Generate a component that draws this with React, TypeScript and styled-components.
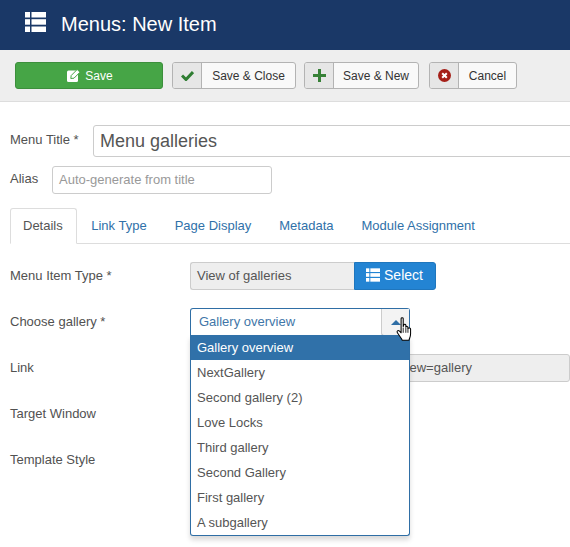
import React from "react";
import styled, { createGlobalStyle } from "styled-components";

const Global = createGlobalStyle`
  html, body { margin: 0; padding: 0; background: #fff; overflow: hidden; }
  body { font-family: "Liberation Sans", Arial, sans-serif; font-size: 13px; color: #515151; width: 570px; height: 547px; }
  * { box-sizing: border-box; }
`;

const Page = styled.div`width: 570px; height: 547px; overflow: hidden;`;

const Header = styled.header`
  height: 50px; background: #1a3867; display: flex; align-items: flex-start; padding: 12px 0 0 25px; gap: 15px;
`;
const HeaderTitle = styled.h1`margin: -13px 0 0; font-size: 20px; font-weight: 400; color: #fff; line-height: 50px;`;

const Toolbar = styled.div`
  height: 52px; background: #eee; border-bottom: 1px solid #ddd; display: flex; padding: 12px 0 0 15px; align-items: flex-start;
`;
const SaveButton = styled.button`
  width: 148px; height: 27px; background: #46a546; border: 1px solid #3c8f3c; border-radius: 3px; color: #fff;
  font: 12px "Liberation Sans", sans-serif; display: flex; align-items: center; justify-content: center; gap: 5px; padding: 0 0 0 2px; margin-right: 9px;
`;
const ToolButton = styled.button<{ $width: number; $gap: number }>`
  width: ${p => p.$width}px; height: 27px; background: #f9f9f9; border: 1px solid #b3b3b3; border-radius: 3px; color: #333;
  font: 12px "Liberation Sans", sans-serif; display: flex; align-items: stretch; padding: 0; margin-right: ${p => p.$gap}px; overflow: hidden;
`;
const ToolIcon = styled.span`
  width: 29px; background: #e6e6e6; border-right: 1px solid #b3b3b3; display: flex; align-items: center; justify-content: center; flex: none;
`;
const ToolLabel = styled.span`flex: 1; display: flex; align-items: center; justify-content: center;`;

const Content = styled.main`padding: 23px 0 0 10px; position: relative;`;

const TitleRow = styled.div`display: flex; align-items: center; height: 32px; white-space: nowrap;`;
const TitleLabel = styled.label`width: 83px; flex: none; color: #515151; font-size: 13px; padding-bottom: 4px;`;
const TitleInput = styled.div`
  width: 500px; height: 32px; flex: none; border: 1px solid #ccc; border-radius: 3px; font-size: 18px; color: #555; padding: 0 6px; display: flex; align-items: center;
`;
const AliasRow = styled.div`display: flex; align-items: center; height: 28px; margin-top: 9px;`;
const AliasLabel = styled.label`width: 42px; flex: none; font-size: 13px; padding-bottom: 4px;`;
const AliasInput = styled.div`
  width: 220px; height: 28px; border: 1px solid #ccc; border-radius: 3px; color: #999; font-size: 13px; padding: 0 6px 2px; display: flex; align-items: center;
`;

const Tabs = styled.nav`display: flex; height: 36px; margin-top: 14px; border-bottom: 1px solid #ddd; align-items: flex-start;`;
const Tab = styled.span<{ $active?: boolean }>`
  height: 36px; padding: 0 14px 2px; display: flex; align-items: center; font-size: 13px;
  color: ${p => (p.$active ? "#555" : "#3071a9")};
  ${p => p.$active ? "background:#fff;border:1px solid #ddd;border-bottom-color:#fff;border-radius:3px 3px 0 0;padding:0 13.5px 2px 12px;" : ""}
`;

const Form = styled.div`padding-top: 18px; display: flex; flex-direction: column; gap: 18px; position: relative;`;
const FormRow = styled.div`display: flex; align-items: center; height: 28px;`;
const RowLabel = styled.label`width: 180px; flex: none; font-size: 13px; padding-bottom: 2px;`;

const TypeField = styled.div`
  width: 164px; height: 28px; background: #eee; border: 1px solid #ccc; border-right: 0; border-radius: 3px 0 0 3px; display: flex; align-items: center; padding: 0 6px 2px; font-size: 13px; color: #555;
`;
const SelectButton = styled.button`
  width: 82px; height: 28px; background: #2384d3; border: 1px solid #1f76bd; border-radius: 0 3px 3px 0; color: #fff; font: 14px "Liberation Sans", sans-serif;
  display: flex; align-items: center; justify-content: center; gap: 4px; padding: 0 1px 2px 0;
`;

const ChosenWrap = styled.div`width: 220px; position: relative; height: 28px;`;
const ChosenField = styled.div`
  height: 28px; border: 1px solid #2f6ea5; border-bottom: 0; border-radius: 3px 3px 0 0; display: flex; background: #fff; color: #3f76a8; font-size: 13px;
`;
const ChosenText = styled.span`flex: 1; display: flex; align-items: center; padding: 0 0 2px 8px;`;
const ChosenArrow = styled.span`
  width: 28px; background: #f3f3f3; border-left: 1px solid #ccc; border-bottom: 1px solid #ccc; border-radius: 0 0 0 3px; display: flex; align-items: center; justify-content: center;
`;
const Caret = styled.span`
  width: 0; height: 0; border-left: 5px solid transparent; border-right: 5px solid transparent; border-bottom: 5px solid #2f6ea5;
`;
const Dropdown = styled.ul`
  position: absolute; top: 27px; left: 0; width: 220px; margin: 0; padding: 0; list-style: none; background: #fff; z-index: 5;
  border: 1px solid #2f6ea5; border-top: 0; border-radius: 0 0 3px 3px; box-shadow: 0 4px 5px rgba(0,0,0,.15);
`;
const Option = styled.li<{ $active?: boolean }>`
  height: 25px; display: flex; align-items: center; padding-left: 6px; font-size: 13px;
  ${p => (p.$active ? "background:#3071a9;color:#fff;" : "color:#555;")}
`;
const Cursor = styled.svg`position: absolute; left: 205px; top: 9px; z-index: 6;`;

const LinkField = styled.div`
  width: 400px; height: 28px; background: #eee; border: 1px solid #ccc; border-radius: 3px; display: flex; align-items: center; padding: 0 0 2px 10px; font-size: 13px; color: #555; white-space: nowrap;
`;

const Bars: React.FC<{ w: number; h: number }> = ({ w, h }) => (
  <svg width={w} height={h} viewBox="0 0 21 20" fill="#fff" style={{ flex: "none" }}>
    <rect x="0" y="0" width="5" height="5.5" />
    <rect x="6.5" y="0" width="14.5" height="5.5" />
    <rect x="0" y="7.2" width="5" height="5.5" />
    <rect x="6.5" y="7.2" width="14.5" height="5.5" />
    <rect x="0" y="14.5" width="5" height="5.5" />
    <rect x="6.5" y="14.5" width="14.5" height="5.5" />
  </svg>
);

const items = ["Gallery overview", "NextGallery", "Second gallery (2)", "Love Locks", "Third gallery", "Second Gallery", "First gallery", "A subgallery"];

export default function App() {
  return (
    <Page>
      <Global />
      <Header>
        <Bars w={21} h={20} />
        <HeaderTitle>Menus: New Item</HeaderTitle>
      </Header>
      <Toolbar>
        <SaveButton>
          <svg width="13" height="13" viewBox="0 0 13 13">
            <rect x="0" y="1.5" width="11" height="11.5" rx="1.5" fill="#fff" />
            <path d="M3.8 9.5 L4.2 6.5 L10.2 0.5 L13 3.2 L7 9.2 Z" fill="#fff" stroke="#46a546" strokeWidth="1" />
          </svg>
          Save
        </SaveButton>
        <ToolButton $width={124} $gap={8}>
          <ToolIcon>
            <svg width="13" height="11" viewBox="0 0 13 11"><path d="M1 5.5 L5 9.5 L12 2" fill="none" stroke="#2f7d32" strokeWidth="3" /></svg>
          </ToolIcon>
          <ToolLabel>Save &amp; Close</ToolLabel>
        </ToolButton>
        <ToolButton $width={115} $gap={10}>
          <ToolIcon>
            <svg width="13" height="13" viewBox="0 0 13 13"><path d="M5 0h3v5h5v3H8v5H5V8H0V5h5z" fill="#378137" /></svg>
          </ToolIcon>
          <ToolLabel>Save &amp; New</ToolLabel>
        </ToolButton>
        <ToolButton $width={88} $gap={0}>
          <ToolIcon>
            <svg width="13" height="13" viewBox="0 0 13 13">
              <circle cx="6.5" cy="6.5" r="6.5" fill="#a51f18" />
              <path d="M4.2 4.2 L8.8 8.8 M8.8 4.2 L4.2 8.8" stroke="#fff" strokeWidth="2" />
            </svg>
          </ToolIcon>
          <ToolLabel>Cancel</ToolLabel>
        </ToolButton>
      </Toolbar>
      <Content>
        <TitleRow>
          <TitleLabel>Menu Title *</TitleLabel>
          <TitleInput>Menu galleries</TitleInput>
        </TitleRow>
        <AliasRow>
          <AliasLabel>Alias</AliasLabel>
          <AliasInput>Auto-generate from title</AliasInput>
        </AliasRow>
        <Tabs>
          <Tab $active>Details</Tab>
          <Tab>Link Type</Tab>
          <Tab>Page Display</Tab>
          <Tab>Metadata</Tab>
          <Tab>Module Assignment</Tab>
        </Tabs>
        <Form>
          <FormRow>
            <RowLabel>Menu Item Type *</RowLabel>
            <TypeField>View of galleries</TypeField>
            <SelectButton>
              <Bars w={14} h={14} />
              Select
            </SelectButton>
          </FormRow>
          <FormRow>
            <RowLabel>Choose gallery *</RowLabel>
            <ChosenWrap>
              <ChosenField>
                <ChosenText>Gallery overview</ChosenText>
                <ChosenArrow><Caret /></ChosenArrow>
              </ChosenField>
              <Dropdown>
                {items.map((t, i) => <Option key={t} $active={i === 0}>{t}</Option>)}
              </Dropdown>
              <Cursor width="18" height="24" viewBox="0.5 0 14.5 22.8">
                <path d="M5 1.5 C5 .5 7 .5 7 1.5 V9 L7.5 7.5 C8 6.5 9.5 6.8 9.5 8 V9.5 C10 8.5 11.5 8.8 11.5 10 V11 C12 10 14 10.3 14 11.5 V16 C14 19 13 20 12.5 22 H6 C5.5 20 3.5 18.5 1.5 15 C.5 13.5 2 12 3.5 13.5 L5 15 Z" fill="#fff" stroke="#000" strokeWidth="1" strokeLinejoin="round" />
                <path d="M7 10 V15 M9.5 10 V15 M11.5 11 V15" stroke="#000" strokeWidth="0.8" />
              </Cursor>
            </ChosenWrap>
          </FormRow>
          <FormRow>
            <RowLabel>Link</RowLabel>
            <LinkField>index.php?option=com_sggallery&amp;view=gallery</LinkField>
          </FormRow>
          <FormRow><RowLabel>Target Window</RowLabel></FormRow>
          <FormRow><RowLabel>Template Style</RowLabel></FormRow>
        </Form>
      </Content>
    </Page>
  );
}
